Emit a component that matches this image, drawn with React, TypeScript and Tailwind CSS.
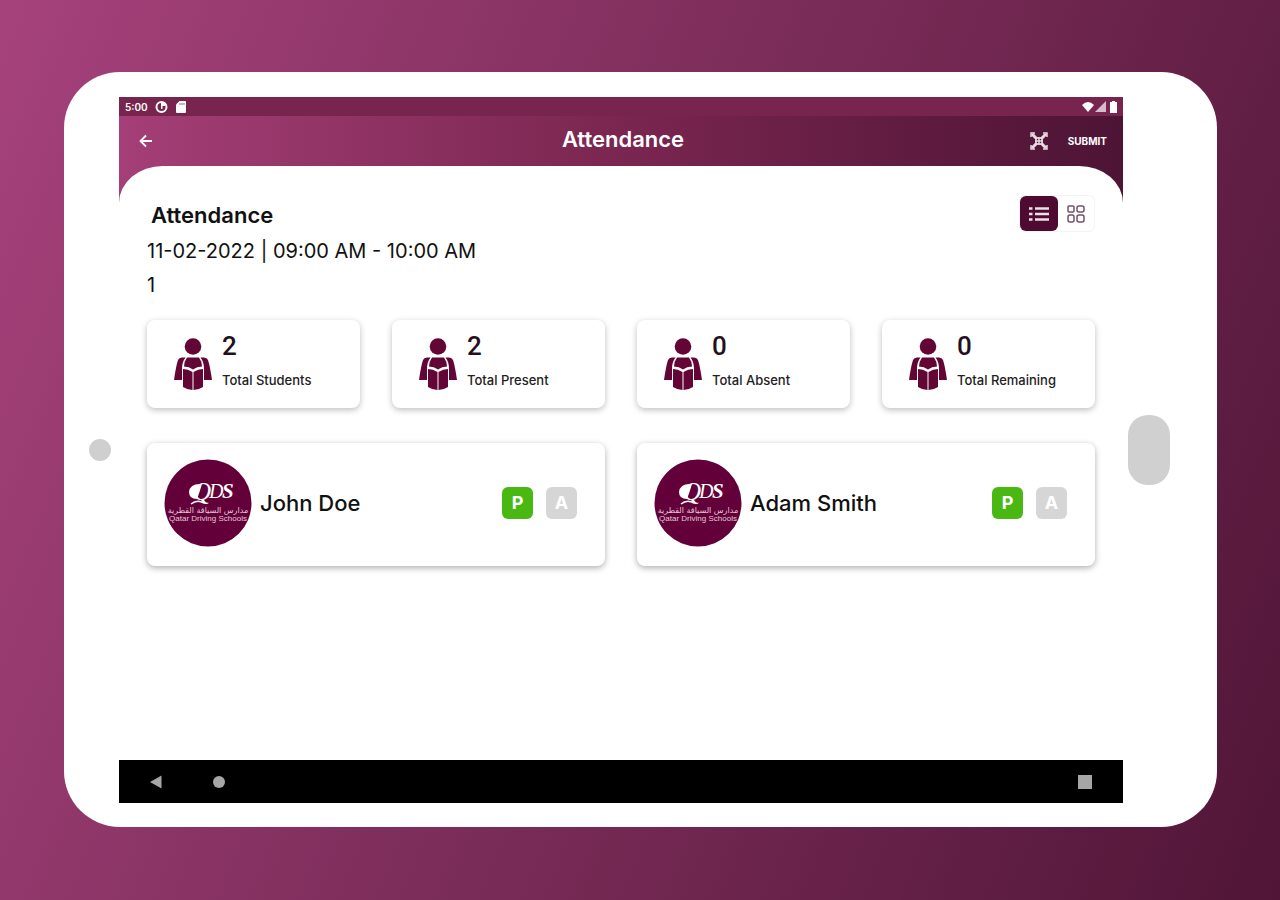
import { useState } from 'react';

interface Stat {
  label: string;
  value: number;
}

interface Student {
  id: number;
  name: string;
}

type Mark = 'P' | 'A';

const stats: Stat[] = [
  { label: 'Total Students', value: 2 },
  { label: 'Total Present', value: 2 },
  { label: 'Total Absent', value: 0 },
  { label: 'Total Remaining', value: 0 },
];

const students: Student[] = [
  { id: 1, name: 'John Doe' },
  { id: 2, name: 'Adam Smith' },
];

function StatusBar() {
  return (
    <div className="flex h-[19px] items-center justify-between bg-[#77254e] pl-1.5 pr-1 text-white">
      <div className="flex items-center gap-2">
        <span className="w-[22px] text-[10px] font-semibold leading-none">5:00</span>
        <svg width="13" height="12" viewBox="0 0 13 12">
          <circle cx="6.5" cy="6" r="5" fill="none" stroke="currentColor" strokeWidth="2" />
          <path d="M6 1h4v4H7.500v3H6z" fill="currentColor" />
        </svg>
        <svg width="10" height="12" viewBox="0 0 10 12">
          <path d="M3.500 0H9q1 0 1 1v10q0 1-1 1H1q-1 0-1-1V3.500z" fill="currentColor" />
          <path d="M4 2v2M6 2v2M8 2v2" stroke="#77254e" strokeWidth="0.700" />
        </svg>
      </div>
      <div className="flex items-center gap-px">
        <svg width="12" height="11" viewBox="0 0 12 11">
          <path d="M0 4Q6-2 12 4L6 11z" fill="currentColor" />
        </svg>
        <svg width="11" height="11" viewBox="0 0 11 11">
          <path d="M11 0v11H0z" fill="#d9bccb" />
        </svg>
        <svg width="12" height="12" viewBox="0 0 12 12">
          <path d="M3 1h2V0h3v1h2v11H3z" fill="currentColor" />
        </svg>
      </div>
    </div>
  );
}

function TopBar() {
  return (
    <div className="grid h-[50px] grid-cols-3 items-center pl-5 pr-4 text-white">
      <button type="button" aria-label="Back" className="justify-self-start">
        <svg width="14" height="14" viewBox="0 0 14 14" fill="none" stroke="currentColor" strokeWidth="1.800">
          <path d="M13 7H2M7 1.500L1.500 7L7 12.500" />
        </svg>
      </button>
      <h1 className="justify-self-center pb-1 text-[22px] font-semibold leading-6">Attendance</h1>
      <div className="flex items-center gap-5 justify-self-end">
        <button type="button" aria-label="Scan code">
          <svg width="18" height="18" viewBox="0 0 18 18" fill="none" stroke="#eadbe3">
            <path d="M2 2l5 5M16 2l-5 5M2 16l5-5M16 16l-5-5" strokeWidth="3" />
            <path d="M1 5V1h4M13 1h4v4M17 13v4h-4M5 17H1v-4" strokeWidth="1.500" />
            <path d="M6 6h6v6H6zM9 5v8M5 9h8" strokeWidth="1.500" />
          </svg>
        </button>
        <button type="button" className="text-[10px] font-bold leading-4">SUBMIT</button>
      </div>
    </div>
  );
}

function StudentIcon() {
  return (
    <svg width="38" height="52" viewBox="0 0 38 52" fill="#630636" className="shrink-0">
      <circle cx="19" cy="8.500" r="8.300" />
      <path d="M8 19.500h3.500Q8 24 8 31V42H0Q2 28 4 22Q5 19.500 8 19.500z" />
      <path d="M30 19.500h-3.500Q30 24 30 31V42H38Q36 28 34 22Q33 19.500 30 19.500z" />
      <path d="M13 19.500h12q3 4 3 9q-5 0-9 3q-4-3-9-3q0-5 3-9z" />
      <path d="M9 31q5 0 9.500 3v18q-5 0-9.500-3z" />
      <path d="M29 31q-5 0-9.500 3v18q5 0 9.500-3z" />
    </svg>
  );
}

function SchoolLogo() {
  return (
    <svg width="88" height="88" viewBox="0 0 88 88" className="shrink-0" role="img" aria-label="QDS">
      <circle cx="44" cy="44" r="43.500" fill="#630039" />
      <path d="M38 25Q26 24 25 33Q25 40 33 40Q36 32 38 25z" fill="#fff" />
      <g fill="#fff" fontFamily="Liberation Serif, serif" fontStyle="italic">
        <text x="29" y="41" fontSize="25">Q</text>
        <text x="45" y="39" fontSize="20">D</text>
        <text x="58" y="39" fontSize="21" fontWeight="700">S</text>
      </g>
      <path d="M27 45q6-5 13-1" fill="none" stroke="#fff" strokeWidth="1.500" />
      <g fill="#e6c9d8" textAnchor="middle" fontFamily="DejaVu Sans, sans-serif">
        <text x="44" y="54" fontSize="8">مدارس السياقة القطرية</text>
        <text x="44" y="62" fontSize="8" fontFamily="Liberation Sans, sans-serif">Qatar Driving Schools</text>
      </g>
    </svg>
  );
}

function StatCard({ label, value }: Stat) {
  return (
    <div className="flex h-[88px] items-center gap-2.5 rounded-lg bg-white pl-[27px] shadow-[0_2px_6px_rgba(0,0,0,0.26)]">
      <StudentIcon />
      <div>
        <p className="font-[Roboto,sans-serif] text-[26px] font-medium leading-8 text-[#24101b]">{value}</p>
        <p className="text-[13px] font-medium leading-9 text-[#222]">{label}</p>
      </div>
    </div>
  );
}

function StudentCard({ name }: { name: string }) {
  const [mark, setMark] = useState<Mark>('P');

  return (
    <li className="flex h-[123px] items-center rounded-lg bg-white pb-[3px] pl-[17px] pr-7 shadow-[0_2px_6px_rgba(0,0,0,0.32)]">
      <SchoolLogo />
      <span className="ml-2 flex-1 text-[22px] font-medium leading-7 text-[#111]">{name}</span>
      <div className="flex gap-[13px]">
        <button
          type="button"
          aria-label="Present"
          onClick={() => setMark('P')}
          className={`h-8 w-[31px] rounded-md text-[18px] font-bold leading-8 text-white ${mark === 'P' ? 'bg-[#4ab813]' : 'bg-[#d6d6d6]'}`}
        >
          P
        </button>
        <button
          type="button"
          aria-label="Absent"
          onClick={() => setMark('A')}
          className={`h-8 w-[31px] rounded-md text-[18px] font-bold leading-8 text-white ${mark === 'A' ? 'bg-[#d3342b]' : 'bg-[#d6d6d6]'}`}
        >
          A
        </button>
      </div>
    </li>
  );
}

function ViewSwitch() {
  return (
    <div className="flex rounded-md border border-[#f5f3f4]">
      <button type="button" aria-label="List view" className="flex h-[35px] w-[38px] items-center justify-center rounded-md bg-[#4e0a30]">
        <svg width="20" height="16" viewBox="0 0 20 16" stroke="#f0dfe8" strokeWidth="2.500">
          <path d="M0 2.500h3.500M6 2.500h14M0 8h3.500M6 8h14M0 13.500h3.500M6 13.500h14" />
        </svg>
      </button>
      <button type="button" aria-label="Grid view" className="flex h-[35px] w-[36px] items-center justify-center">
        <svg width="18" height="18" viewBox="0 0 18 18" fill="none" stroke="#75506a" strokeWidth="1.500">
          <rect x="1" y="1" width="6" height="6" rx="1" />
          <rect x="10" y="1" width="7" height="6" rx="2" />
          <rect x="1" y="10" width="6" height="7" rx="2" />
          <rect x="10" y="10" width="7" height="7" rx="2" />
        </svg>
      </button>
    </div>
  );
}

function NavBar() {
  return (
    <nav className="flex h-[43px] items-center bg-black px-[31px] text-[#a6a6a6]">
      <button type="button" aria-label="Back">
        <svg width="12" height="14" viewBox="0 0 12 14" fill="currentColor">
          <path d="M11.500 0.500v13L0 7z" />
        </svg>
      </button>
      <button type="button" aria-label="Home" className="ml-[51px] size-3 rounded-full bg-current" />
      <button type="button" aria-label="Recent apps" className="ml-auto size-3.5 bg-current" />
    </nav>
  );
}

export default function App() {
  return (
    <div className="flex min-h-screen bg-[linear-gradient(112deg,#a6427c,#7a2c58_50%,#501537)] pb-[73px] pl-16 pr-[63px] pt-[72px] font-[Inter,sans-serif]">
      <div className="flex flex-1 items-center rounded-[56px] bg-white pb-6 pt-[25px]">
        <div className="w-[55px] shrink-0 pl-[25px]">
          <div className="size-[22px] rounded-full bg-[#cfcfcf]" />
        </div>

        {/* Tablet screen */}
        <div className="flex min-w-0 flex-1 flex-col self-stretch">
          <header className="bg-linear-to-r from-[#a43f77] via-[#7a2650] to-[#4d1435] pb-[37px]">
            <StatusBar />
            <TopBar />
          </header>

          <main className="-mt-[37px] flex-1 rounded-t-[44px_37px] bg-white px-7 pt-[29px]">
            <div className="flex items-start justify-between">
              <div className="pt-0.5 text-[#111]">
                <h2 className="pl-1 text-[22px] font-semibold leading-9">Attendance</h2>
                <p className="text-[20px] leading-9">11-02-2022 | 09:00 AM - 10:00 AM</p>
                <p className="text-[20px] leading-8">1</p>
              </div>
              <ViewSwitch />
            </div>

            <section className="mt-[19px] grid grid-cols-4 gap-8">
              {stats.map((stat) => (
                <StatCard key={stat.label} {...stat} />
              ))}
            </section>

            <ul className="mt-[35px] grid grid-cols-2 gap-8">
              {students.map((student) => (
                <StudentCard key={student.id} name={student.name} />
              ))}
            </ul>
          </main>

          <NavBar />
        </div>

        <div className="w-[94px] shrink-0 pl-[5px]">
          <div className="h-[70px] w-[42px] rounded-[20px] bg-[#d0d0d0]" />
        </div>
      </div>
    </div>
  );
}
